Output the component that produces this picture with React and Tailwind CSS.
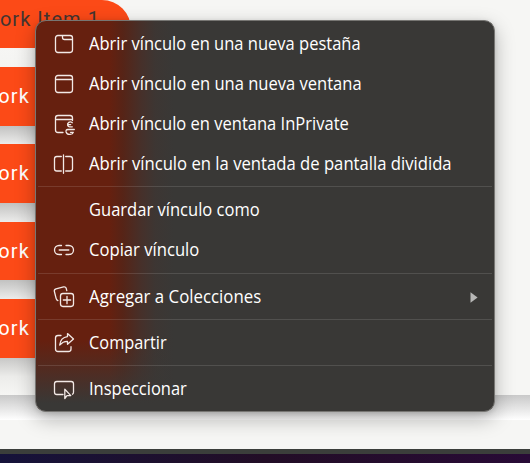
import React from "react";

const stroke = {
  fill: "none",
  stroke: "#f3e9e6",
  strokeWidth: 1.3,
  strokeLinecap: "round",
  strokeLinejoin: "round",
};

function Icon({ children }) {
  return (
    <svg width="24" height="24" viewBox="0 0 24 24" {...stroke} className="shrink-0">
      {children}
    </svg>
  );
}

const icons = {
  tab: (
    <Icon>
      <rect x="3.5" y="3.5" width="17" height="17" rx="2.4" />
      <path d="M10.5 3.8V5.5Q10.5 7.5 12.5 7.5H20.4" />
    </Icon>
  ),
  window: (
    <Icon>
      <rect x="3.5" y="3.5" width="17" height="17" rx="2.4" />
      <path d="M3.8 7.5H20.4" />
    </Icon>
  ),
  priv: (
    <Icon>
      <path d="M11 20.5H6Q3.5 20.5 3.5 18V6Q3.5 3.5 6 3.5H18Q20.5 3.5 20.5 6V8.5M3.8 7.5H20.4" />
      <path d="M20.3 10.7Q18.5 9.4 16.8 10.4Q15 11.6 15.7 13.6Q16.3 15 18 14.8H20.3M16 12.6H18.7" />
      <path d="M22.3 17.5H15.8Q13.6 17.7 14.1 20Q15 22.6 18 22.4Q20.8 22.2 21.3 20.3H18.5" />
    </Icon>
  ),
  split: (
    <Icon>
      <path d="M9.3 4.5H4.8Q2.5 4.5 2.5 6.8V16.7Q2.5 19 4.8 19H9.3M13.7 4.5H18.2Q20.5 4.5 20.5 6.8V16.7Q20.5 19 18.2 19H13.7M11.5 2.8V21.3" />
    </Icon>
  ),
  link: (
    <Icon>
      <path d="M9.5 7.5H7A4.5 4.5 0 0 0 7 16.5H9.5M14 7.5H17A4.5 4.5 0 0 1 17 16.5H14M7.2 12H16.8" />
    </Icon>
  ),
  collect: (
    <Icon>
      <rect x="8.5" y="8.5" width="13" height="13" rx="2.4" />
      <path d="M15 11.3V18.7M11.3 15H18.7" />
      <path d="M5.9 15.6Q4.5 15.1 4.1 13.4L2.4 6.5Q1.9 4.4 4 3.8L11.6 1.9Q13.6 1.5 14.2 3.3L14.8 5.6" />
    </Icon>
  ),
  share: (
    <Icon>
      <path d="M9 4.5H6Q3.5 4.5 3.5 7V18Q3.5 20.5 6 20.5H16.5Q19 20.5 19 18V15.7" />
      <path d="M15.5 2.6L21.5 8L15.5 13.3V10.4Q11.2 10.2 7.7 14Q8.5 6.5 15.5 5.6Z" />
    </Icon>
  ),
  inspect: (
    <Icon>
      <path d="M11 17.5H4.8Q2.5 17.5 2.5 15.2V6.8Q2.5 4.5 4.8 4.5H19.2Q21.5 4.5 21.5 6.8V15.2Q21.5 16.7 20.5 17.2" />
      <path d="M12.8 12.3V21.5L15 18.6H18.8Z" />
    </Icon>
  ),
};

const groups = [
  [
    ["tab", "Abrir vínculo en una nueva pestaña", "scale-x-[0.917]"],
    ["window", "Abrir vínculo en una nueva ventana", "scale-x-[0.919]"],
    ["priv", "Abrir vínculo en ventana InPrivate", "scale-x-[0.918]"],
    ["split", "Abrir vínculo en la ventada de pantalla dividida", "scale-x-[0.926]"],
  ],
  [
    [null, "Guardar vínculo como", "scale-x-[0.919]"],
    ["link", "Copiar vínculo", "scale-x-[0.924]"],
  ],
  [["collect", "Agregar a Colecciones", "scale-x-[0.935]", true]],
  [["share", "Compartir", "scale-x-[0.908]"]],
  [["inspect", "Inspeccionar", "scale-x-[0.916]"]],
];

const separators = [null, "h-[6px] pt-[2px]", "h-[7px] pt-[3px]", "h-[6px] pt-[2px]", "h-[6px] pt-[2px]"];

function MenuItem({ icon, label, scale, submenu }) {
  return (
    <li className="flex h-10 items-center pr-4 pl-4">
      <span className="mr-[13px] flex h-6 w-6 shrink-0">{icon && icons[icon]}</span>
      <span className={"origin-left pb-[2px] whitespace-nowrap text-[18px] leading-6 text-white " + scale}>{label}</span>
      {submenu && (
        <svg width="8" height="11" viewBox="0 0 8 11" className="ml-auto shrink-0">
          <path d="M0.5 0.3L7.6 5.5L0.5 10.7Z" fill="#b7b7b6" />
        </svg>
      )}
    </li>
  );
}

const buttons = [
  ["h-[59px]", "h-[18px]"],
  ["h-[59px]", "h-[19px]"],
  ["h-[58px]", "h-[19px]"],
  ["h-[59px]", null],
];

export default function App() {
  return (
    <div className="relative h-[463px] w-[530px] overflow-hidden bg-[#f6f6f4]">
      <div className="flex h-full flex-col">
        <nav className="flex h-[395px] shrink-0 flex-col font-['Roboto',sans-serif] text-[20px] tracking-[1.15px] text-white">
          <div className="flex h-[48px] w-[131px] shrink-0 items-end justify-end rounded-tr-[29px] bg-[#fc4a17] pr-[31px] pb-[14px] leading-[30px] tracking-[1.05px] whitespace-nowrap text-[#443531]">
            Work Item 1
          </div>
          <div className="h-[19px] w-[110px] shrink-0 bg-linear-to-b from-[#f6f6f4] to-[#f4f4f2]" />
          {buttons.map(([height, gap], i) => (
            <React.Fragment key={i}>
              <div
                className={
                  "flex w-[131px] shrink-0 items-center justify-end bg-[#fc4a17] pr-[101px] pb-[1px] whitespace-nowrap " + height
                }
              >
                Work
              </div>
              {gap && <div className={"w-[131px] shrink-0 bg-linear-to-b from-[#c2c2c1] to-[#ececeb] " + gap} />}
            </React.Fragment>
          ))}
          <div className="h-[37px] w-[131px] shrink-0 bg-linear-to-b from-[#c8c8c7] via-[#ececea] to-[#f6f6f4]" />
        </nav>
        <div className="h-[25px] shrink-0 bg-linear-to-b from-[#c9c9c9] to-white" />
        <div className="h-[29px] shrink-0" />
        <div className="h-[5px] shrink-0 bg-[#3b3e3b]" />
        <div className="h-[9px] shrink-0 bg-linear-to-r from-[#15123a] via-[#220d26] to-[#280a36]" />
      </div>

      <ul className="absolute top-[20px] left-[35px] flex h-[392px] w-[460px] flex-col rounded-[11px] border border-[#777673] bg-[#393836] bg-[linear-gradient(to_bottom,transparent_82%,#393836_98%),linear-gradient(to_right,#66200f_0%,#66200f_16%,#562417_19%,#46302a_23%,#3d3633_26%,#393836_30%)] pt-[3px] font-['Open_Sans','Noto_Sans',sans-serif] shadow-[0_7px_20px_rgba(0,0,0,0.28),0_1px_5px_rgba(0,0,0,0.12)]">
        {groups.map((items, g) => (
          <React.Fragment key={g}>
            {separators[g] && (
              <li className={"shrink-0 px-[2px] " + separators[g]}>
                <div className="h-px bg-white/12" />
              </li>
            )}
            {items.map(([icon, label, scale, submenu]) => (
              <MenuItem key={label} icon={icon} label={label} scale={scale} submenu={submenu} />
            ))}
          </React.Fragment>
        ))}
      </ul>
    </div>
  );
}
